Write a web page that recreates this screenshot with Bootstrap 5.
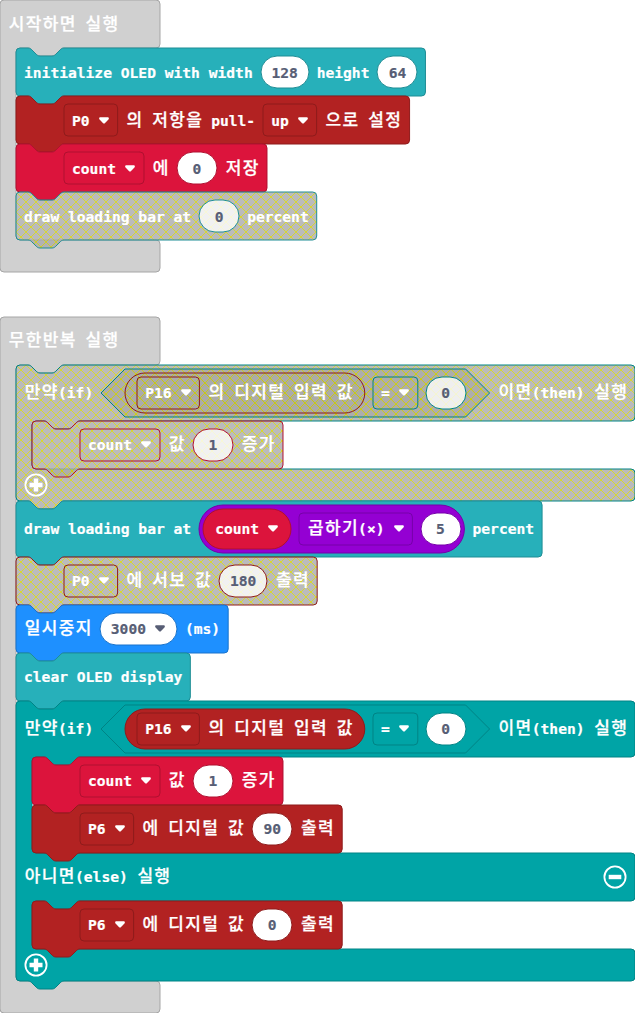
<!DOCTYPE html>
<html lang="ko">
<head>
<meta charset="utf-8">
<meta name="viewport" content="width=device-width, initial-scale=1">
<title>Blocks</title>
<link href="https://cdn.jsdelivr.net/npm/bootstrap@5.3.0/dist/css/bootstrap.min.css" rel="stylesheet">
<style>
  body { background:#fff; overflow:hidden; color:#fff; font:700 14.62px/20px "DejaVu Sans Mono","Noto Sans CJK KR",monospace; -webkit-text-stroke:.2px currentColor; }
  .workspace { width:635px; --drop:1px; }
  .ko { font-family:"Noto Sans CJK KR",sans-serif; font-size:17px; font-weight:500; letter-spacing:1.36px; line-height:1; margin:0 -.8px 0 .8px; -webkit-text-stroke:.25px currentColor; }
  .piece { position:relative; isolation:isolate; width:fit-content; white-space:nowrap; }
  .shape { position:absolute; inset:0; width:100%; height:100%; overflow:visible; z-index:-1; pointer-events:none; }
  .line { height:48px; padding:0 8px; gap:8px; }
  .tall { height:56px; }
  .foot { height:32px; padding:0 8px; }
  .nest { padding-left:16px; }
  .lead-in { padding-left:48px; }
  .hat { width:160px; }
  .wide { width:619px; }
  .field { height:32px; padding:var(--drop) 9px 0 8px; gap:9px; }
  .num { height:32px; min-width:40px; padding:var(--drop) 10.8px 0; gap:9px; color:#575e75; }
  .num.pick { padding:var(--drop) 12px 0 10.8px; }
  .pill { height:40px; padding:0 12px; gap:8px; }
  .var { padding:var(--drop) 13px 0 12px; gap:9px; }
  .math { height:48px; padding:0 4px; gap:8px; }
  .cond { height:48px; padding:0 24px; gap:8px; }
  .label { padding-top:var(--drop); }
  .arrow { width:10px; height:7px; flex:none; fill:currentColor; }
  .knob { width:24px; height:24px; flex:none; }
  .gap-scripts { margin-top:44.6px; --drop:0px; }
  .c-hat { --c:#d0d0d0; --s:#a6a6a6; }
  .c-oled { --c:#27b0ba; --s:#1f8d95; }
  .c-pin { --c:#b22222; --s:#8e1b1b; }
  .c-var { --c:#dc143c; --s:#b01030; }
  .c-logic { --c:#00a4a6; --s:#008385; }
  .c-math { --c:#9400d3; --s:#7600a9; }
  .c-basic { --c:#1e90ff; --s:#1873cc; }
</style>
</head>
<body>
<svg width="0" height="0" class="position-absolute">
  <defs>
    <pattern id="off" patternUnits="userSpaceOnUse" width="10" height="10">
      <rect width="10" height="10" fill="#aaa"/>
      <path d="M0 0L10 10M10 0L0 10" stroke="#cc0" fill="none"/>
    </pattern>
    <symbol id="tri" viewBox="0 0 10 7"><path d="M1.6 .3H8.4C9.9 .3 10.3 1.6 9.4 2.6L6.1 6.1Q5 7.1 3.9 6.1L.6 2.6C-.3 1.6 .1 .3 1.6 .3Z"/></symbol>
    <symbol id="plus" viewBox="0 0 24 24"><circle cx="12" cy="12" r="10.6" fill="none" stroke="#fff" stroke-width="1.8"/><path d="M12 5.5V18.5M5.5 12H18.5" stroke="#fff" stroke-width="4.4"/></symbol>
    <symbol id="minus" viewBox="0 0 24 24"><circle cx="12" cy="12" r="10.6" fill="none" stroke="#fff" stroke-width="1.8"/><path d="M5.7 12H18.3" stroke="#fff" stroke-width="4.4"/></symbol>
  </defs>
</svg>

<main class="workspace d-flex flex-column">
  <section class="piece hat c-hat" data-shape="hat">
    <div class="line d-flex align-items-center"><span>시작하면 실행</span></div>
    <div class="nest">
      <div class="piece c-oled" data-shape="block">
        <div class="line d-flex align-items-center"><span>initialize OLED with width</span><span class="num piece d-flex align-items-center justify-content-center" data-shape="num">128</span><span>height</span><span class="num piece d-flex align-items-center justify-content-center" data-shape="num">64</span></div>
      </div>
      <div class="piece c-pin" data-shape="block">
        <div class="line lead-in d-flex align-items-center"><span class="field piece d-flex align-items-center" data-shape="field">P0<i></i></span><span>의 저항을 pull-</span><span class="field piece d-flex align-items-center" data-shape="field">up<i></i></span><span>으로 설정</span></div>
      </div>
      <div class="piece c-var" data-shape="block">
        <div class="line lead-in d-flex align-items-center"><span class="field piece d-flex align-items-center" data-shape="field">count<i></i></span><span>에</span><span class="num piece d-flex align-items-center justify-content-center" data-shape="num">0</span><span>저장</span></div>
      </div>
      <div class="piece c-oled off" data-shape="block">
        <div class="line d-flex align-items-center"><span>draw loading bar at</span><span class="num piece d-flex align-items-center justify-content-center" data-shape="num">0</span><span>percent</span></div>
      </div>
    </div>
    <div class="foot"></div>
  </section>

  <section class="piece hat c-hat gap-scripts" data-shape="hat">
    <div class="line d-flex align-items-center"><span>무한반복 실행</span></div>
    <div class="nest">
      <div class="piece wide c-logic off" data-shape="block">
        <div class="line tall d-flex align-items-center"><span>만약(if)</span><span class="cond piece d-flex align-items-center" data-shape="hex"><span class="pill piece c-pin d-flex align-items-center" data-shape="round"><span class="field piece d-flex align-items-center" data-shape="field">P16<i></i></span><span>의 디지털 입력 값</span></span><span class="field piece d-flex align-items-center" data-shape="field">=<i></i></span><span class="num piece d-flex align-items-center justify-content-center" data-shape="num">0</span></span><span>이면(then) 실행</span></div>
        <div class="nest">
          <div class="piece c-var off" data-shape="block">
            <div class="line lead-in d-flex align-items-center"><span class="field piece d-flex align-items-center" data-shape="field">count<i></i></span><span>값</span><span class="num piece d-flex align-items-center justify-content-center" data-shape="num">1</span><span>증가</span></div>
          </div>
        </div>
        <div class="foot d-flex align-items-center"><svg class="knob"><use href="#plus"/></svg></div>
      </div>
      <div class="piece c-oled" data-shape="block">
        <div class="line tall d-flex align-items-center"><span>draw loading bar at</span><span class="math piece c-math d-flex align-items-center" data-shape="round"><span class="pill var piece c-var d-flex align-items-center" data-shape="round">count<i></i></span><span class="field piece d-flex align-items-center" data-shape="field"><span>곱하기(×)</span><i></i></span><span class="num piece d-flex align-items-center justify-content-center" data-shape="num">5</span></span><span>percent</span></div>
      </div>
      <div class="piece c-pin off" data-shape="block">
        <div class="line lead-in d-flex align-items-center"><span class="field piece d-flex align-items-center" data-shape="field">P0<i></i></span><span>에 서보 값</span><span class="num piece d-flex align-items-center justify-content-center" data-shape="num">180</span><span>출력</span></div>
      </div>
      <div class="piece c-basic" data-shape="block">
        <div class="line d-flex align-items-center"><span>일시중지</span><span class="num pick piece d-flex align-items-center" data-shape="num">3000<i></i></span><span>(ms)</span></div>
      </div>
      <div class="piece c-oled" data-shape="block">
        <div class="line d-flex align-items-center"><span>clear OLED display</span></div>
      </div>
      <div class="piece wide c-logic" data-shape="block">
        <div class="line tall d-flex align-items-center"><span>만약(if)</span><span class="cond piece d-flex align-items-center" data-shape="hex"><span class="pill piece c-pin d-flex align-items-center" data-shape="round"><span class="field piece d-flex align-items-center" data-shape="field">P16<i></i></span><span>의 디지털 입력 값</span></span><span class="field piece d-flex align-items-center" data-shape="field">=<i></i></span><span class="num piece d-flex align-items-center justify-content-center" data-shape="num">0</span></span><span>이면(then) 실행</span></div>
        <div class="nest">
          <div class="piece c-var" data-shape="block">
            <div class="line lead-in d-flex align-items-center"><span class="field piece d-flex align-items-center" data-shape="field">count<i></i></span><span>값</span><span class="num piece d-flex align-items-center justify-content-center" data-shape="num">1</span><span>증가</span></div>
          </div>
          <div class="piece c-pin" data-shape="block">
            <div class="line lead-in d-flex align-items-center"><span class="field piece d-flex align-items-center" data-shape="field">P6<i></i></span><span>에 디지털 값</span><span class="num piece d-flex align-items-center justify-content-center" data-shape="num">90</span><span>출력</span></div>
          </div>
        </div>
        <div class="line d-flex align-items-center justify-content-between"><span>아니면(else) 실행</span><svg class="knob"><use href="#minus"/></svg></div>
        <div class="nest">
          <div class="piece c-pin" data-shape="block">
            <div class="line lead-in d-flex align-items-center"><span class="field piece d-flex align-items-center" data-shape="field">P6<i></i></span><span>에 디지털 값</span><span class="num piece d-flex align-items-center justify-content-center" data-shape="num">0</span><span>출력</span></div>
          </div>
        </div>
        <div class="foot d-flex align-items-center"><svg class="knob"><use href="#plus"/></svg></div>
      </div>
    </div>
    <div class="foot"></div>
  </section>
</main>

<script src="https://cdn.jsdelivr.net/npm/bootstrap@5.3.0/dist/js/bootstrap.bundle.min.js"></script>
<script>
  // Dropdown arrows
  document.querySelectorAll('main i').forEach(i => {
    i.outerHTML = '<svg class="arrow"><use href="#tri"/></svg>';
  });
  // Hangul runs get their own face and pitch
  document.querySelectorAll('main span').forEach(s => {
    if (s.children.length || s.classList.contains('piece')) return;
    s.classList.add('label');
    if (/[가-힣]/.test(s.textContent))
      s.innerHTML = s.textContent.replace(/[가-힣]+/g, '<span class="ko">$&</span>');
  });
  // Connector notch, left to right and right to left
  const NOTCH = 'c2,0 3,1 4,2l4,4c1,1 2,2 4,2h12c2,0 3,-1 4,-2l4,-4c1,-1 2,-2 4,-2';
  const BUMP = 'c-2,0 -3,1 -4,2l-4,4c-1,1 -2,2 -4,2h-12c-2,0 -3,-1 -4,-2l-4,-4c-1,-1 -2,-2 -4,-2';

  function outline(el, w, h) {
    const hat = el.dataset.shape === 'hat';
    let d = 'M0,4a4,4 0 0 1 4,-4' + (hat ? '' : 'H12' + NOTCH) + `H${w - 4}a4,4 0 0 1 4,4`;
    for (const part of el.children) {
      if (!part.classList.contains('nest')) continue;
      const top = part.offsetTop, bottom = top + part.offsetHeight;
      d += `V${top - 4}a4,4 0 0 1 -4,4H64${BUMP}H20a4,4 0 0 0 -4,4V${bottom - 4}a4,4 0 0 0 4,4H${w - 4}a4,4 0 0 1 4,4`;
    }
    return d + `V${h - 4}a4,4 0 0 1 -4,4` + (hat ? '' : 'H48' + BUMP) + 'H4a4,4 0 0 1 -4,-4Z';
  }

  document.querySelectorAll('.piece').forEach(el => {
    const box = el.getBoundingClientRect(), w = box.width, h = box.height;
    const kind = el.dataset.shape, off = !!el.closest('.off');
    let fill = off ? 'url(#off)' : 'var(--c)', alpha = off ? .8 : 1, body;
    if (kind === 'num') fill = '#fff';
    if (kind === 'field') fill = 'none';
    if (kind === 'hex') body = `<path d="M24,0H${w - 24}L${w},${h / 2}L${w - 24},${h}H24L0,${h / 2}Z"`;
    else if (kind === 'block' || kind === 'hat') body = `<path d="${outline(el, w, h)}"`;
    else body = `<rect width="${w}" height="${h}" rx="${kind === 'field' ? 4 : h / 2}"`;
    el.insertAdjacentHTML('afterbegin',
      `<svg class="shape">${body} fill="${fill}" fill-opacity="${alpha}" stroke="var(--s)"/></svg>`);
  });
</script>
</body>
</html>
